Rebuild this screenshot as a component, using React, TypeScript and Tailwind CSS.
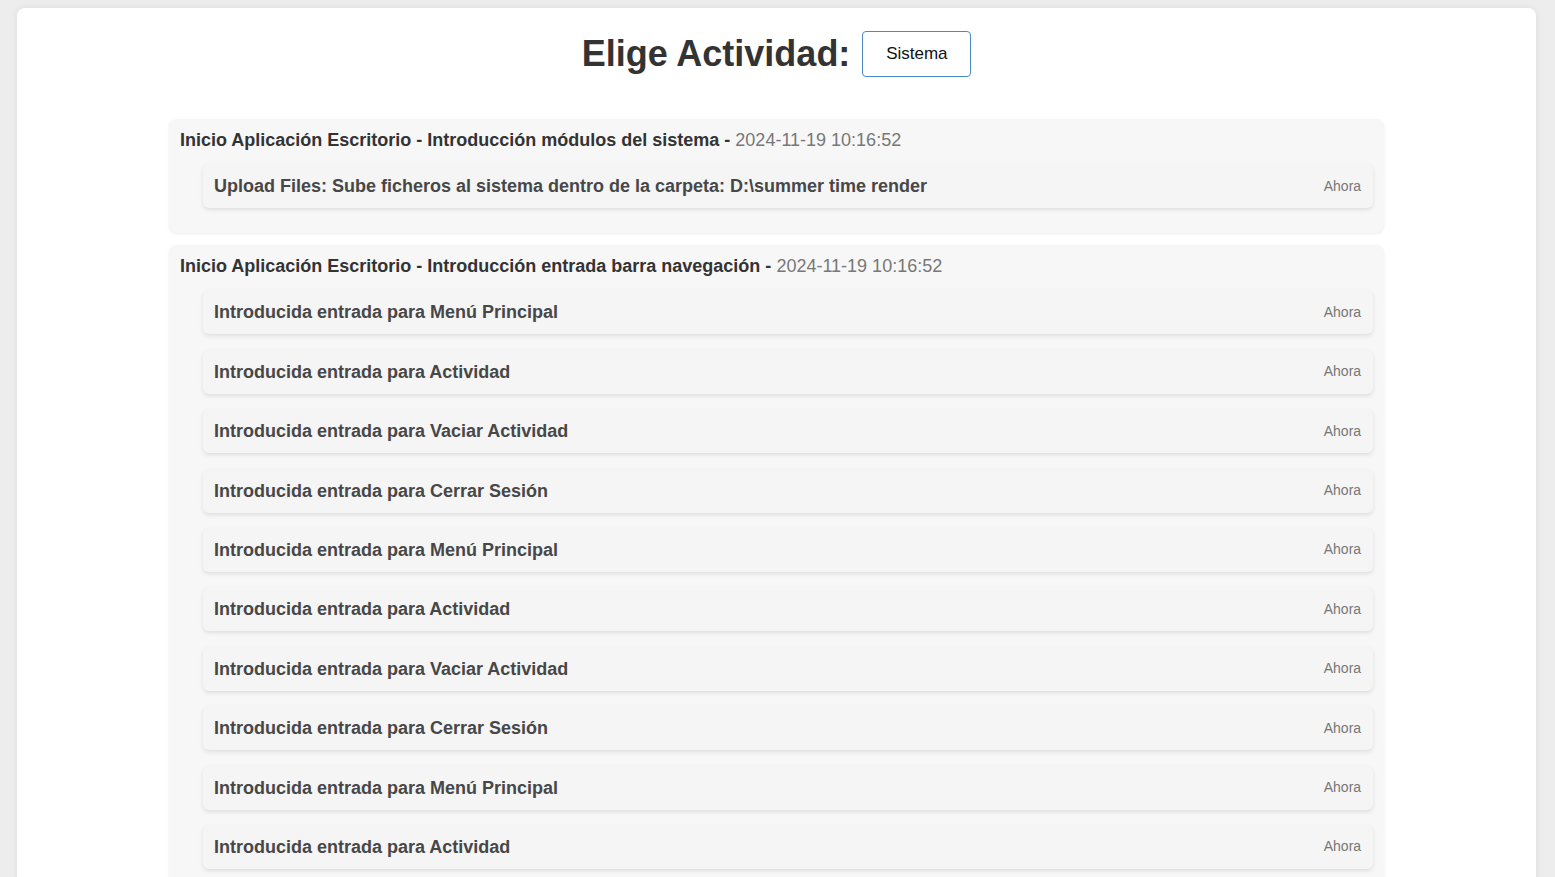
const groups = [
  {
    title: 'Inicio Aplicación Escritorio - Introducción módulos del sistema -',
    date: '2024-11-19 10:16:52',
    items: ['Upload Files: Sube ficheros al sistema dentro de la carpeta: D:\\summer time render'],
  },
  {
    title: 'Inicio Aplicación Escritorio - Introducción entrada barra navegación -',
    date: '2024-11-19 10:16:52',
    items: [
      'Introducida entrada para Menú Principal',
      'Introducida entrada para Actividad',
      'Introducida entrada para Vaciar Actividad',
      'Introducida entrada para Cerrar Sesión',
      'Introducida entrada para Menú Principal',
      'Introducida entrada para Actividad',
      'Introducida entrada para Vaciar Actividad',
      'Introducida entrada para Cerrar Sesión',
      'Introducida entrada para Menú Principal',
      'Introducida entrada para Actividad',
      'Introducida entrada para Vaciar Actividad',
      'Introducida entrada para Cerrar Sesión',
    ],
  },
];

function LogItem({ text }: { text: string }) {
  return (
    <div className="mb-[15.4px] ml-[23px] flex h-[44px] items-center justify-between rounded-md bg-[#f5f5f5] pl-[11px] pr-3 shadow-[0_2px_4px_rgba(0,0,0,0.1)]">
      <span className="text-[18px] font-bold leading-[20px] text-[#474747]">{text}</span>
      <span className="text-[14px] text-[#777]">Ahora</span>
    </div>
  );
}

export default function App() {
  return (
    <div className="min-h-screen bg-[#ededed] pt-2 font-['Liberation_Sans',Arial,sans-serif]">
      <div className="ml-[17px] mr-[19px] rounded-lg bg-white pb-10 pt-[23px] shadow-[0_0_6px_rgba(0,0,0,0.08)]">
        <div className="flex items-center justify-center gap-3">
          <h1 className="text-[36px] font-bold leading-[46px] text-[#333]">Elige Actividad:</h1>
          <button className="h-[46px] w-[109px] rounded-[4px] border border-[#4a8ac4] bg-white text-[17px] text-[#111]">
            Sistema
          </button>
        </div>

        <div className="mx-auto mt-[42px] w-[80%]">
          {groups.map((g, i) => (
            <div
              key={i}
              className="mb-3 rounded-lg bg-[#f7f7f7] px-[11px] pb-[10px] pt-[10px] shadow-[0_1px_3px_rgba(0,0,0,0.08)]"
            >
              <div className="mb-[13px] text-[18px] leading-[22px] text-[#333]">
                <span className="font-bold">{g.title}</span>{' '}
                <span className="text-[#777]">{g.date}</span>
              </div>
              {g.items.map((t, j) => (
                <LogItem key={j} text={t} />
              ))}
            </div>
          ))}
        </div>
      </div>
    </div>
  );
}
